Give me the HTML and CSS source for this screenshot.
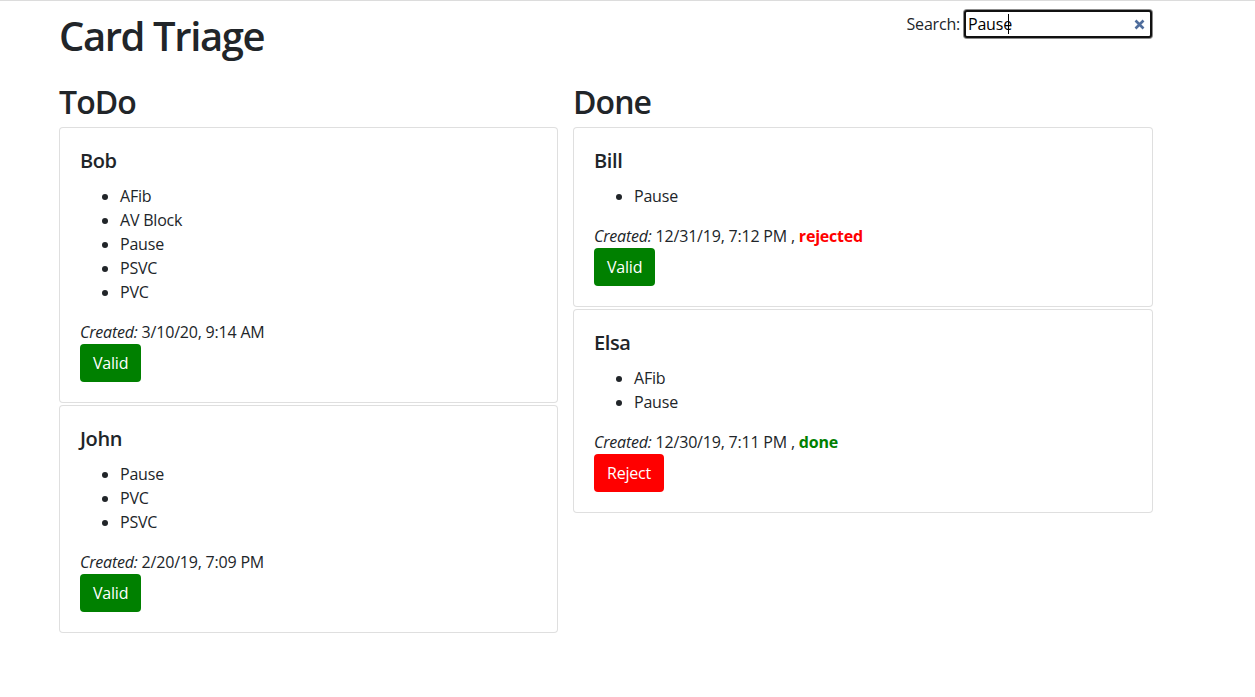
FILE: index.html
```html
<!DOCTYPE html>
<html lang="en">
<head>
<meta charset="utf-8">
<title>Card Triage</title>
<link rel="stylesheet" href="styles.css">
</head>
<body>
<div class="page">
  <header class="header">
    <h1 class="title">Card Triage</h1>
    <div class="search">
      <label class="search-label" for="q">Search:</label>
      <div class="search-box">
        <input id="q" class="search-input" type="text" value="Pause">
        <span class="caret"></span>
        <svg class="clear" width="11" height="11" viewBox="0 0 11 11"><path d="M1.5 1.5 L9.5 9.5 M9.5 1.5 L1.5 9.5" stroke="#4f6d9c" stroke-width="2.6" stroke-linecap="butt"/></svg>
      </div>
    </div>
  </header>
  <main class="board">
    <section class="column">
      <h2 class="col-title">ToDo</h2>
      <div class="cards">
        <div class="card">
          <h5 class="card-title">Bob</h5>
          <ul class="tags"><li>AFib</li><li>AV Block</li><li>Pause</li><li>PSVC</li><li>PVC</li></ul>
          <div class="meta"><em>Created:</em> 3/10/20, 9:14 AM</div>
          <button class="btn btn-valid">Valid</button>
        </div>
        <div class="card">
          <h5 class="card-title">John</h5>
          <ul class="tags"><li>Pause</li><li>PVC</li><li>PSVC</li></ul>
          <div class="meta"><em>Created:</em> 2/20/19, 7:09 PM</div>
          <button class="btn btn-valid">Valid</button>
        </div>
      </div>
    </section>
    <section class="column">
      <h2 class="col-title">Done</h2>
      <div class="cards">
        <div class="card">
          <h5 class="card-title">Bill</h5>
          <ul class="tags"><li>Pause</li></ul>
          <div class="meta"><em>Created:</em> 12/31/19, 7:12 PM , <strong class="st-rejected">rejected</strong></div>
          <button class="btn btn-valid">Valid</button>
        </div>
        <div class="card">
          <h5 class="card-title">Elsa</h5>
          <ul class="tags"><li>AFib</li><li>Pause</li></ul>
          <div class="meta"><em>Created:</em> 12/30/19, 7:11 PM , <strong class="st-done">done</strong></div>
          <button class="btn btn-reject">Reject</button>
        </div>
      </div>
    </section>
  </main>
</div>
</body>
</html>
```
FILE: styles.css
```css
* { box-sizing: border-box; }
html, body { margin: 0; padding: 0; }
body {
  border-top: 1px solid #dcdcdc;
  background: #fff;
  color: #212529;
  font-family: "Open Sans", "Liberation Sans", sans-serif;
  font-size: 16px;
  line-height: 1.5;
  letter-spacing: -0.2px;
}
.page {
  width: 1094px;
  margin-left: 59px;
}
.header {
  display: flex;
  justify-content: space-between;
  align-items: flex-start;
}
.title {
  margin: 11px 0 0 0;
  font-size: 40px;
  font-weight: 600;
  line-height: 48px;
  letter-spacing: -1.4px;
}
.search {
  display: flex;
  align-items: center;
  margin-top: 9px;
  gap: 4px;
  margin-right: 1px;
}
.search-label { font-size: 16px; }
.search-box {
  position: relative;
  width: 188px;
  height: 28px;
}
.search-input {
  width: 100%;
  height: 100%;
  margin: 0;
  padding: 0 2px;
  border: 2px solid #111;
  border-radius: 3px;
  box-shadow: 0 0 0 1px #8a8a8a;
  font-family: inherit;
  font-size: 16px;
  letter-spacing: -0.2px;
  color: #000;
  outline: none;
  background: #fff;
}
.caret {
  position: absolute;
  left: 44px;
  top: 4px;
  width: 1px;
  height: 20px;
  background: #000;
}
.clear {
  position: absolute;
  right: 7px;
  top: 9px;
}
.board {
  display: grid;
  grid-template-columns: 499px 580px;
  column-gap: 15px;
  align-items: start;
  margin-top: 23px;
}
.col-title {
  margin: 0 0 6px 0;
  font-size: 32px;
  font-weight: 600;
  line-height: 38px;
  letter-spacing: -0.9px;
}
.cards {
  display: flex;
  flex-direction: column;
  gap: 2px;
}
.card {
  border: 1px solid rgba(0,0,0,.125);
  border-radius: 4px;
  padding: 20px;
  background: #fff;
}
.card-title {
  margin: 0 0 11px 0;
  padding-top: 1px;
  font-size: 20px;
  font-weight: 600;
  line-height: 24px;
  letter-spacing: -0.4px;
}
.tags {
  margin: 0 0 16px 0;
  padding-left: 40px;
}
.meta em { font-style: italic; }
.st-rejected { color: #ff0000; font-weight: 700; }
.st-done { color: #008000; font-weight: 700; }
.btn {
  display: inline-block;
  padding: 6px 12px;
  border: 1px solid transparent;
  border-radius: 4px;
  font-family: inherit;
  font-size: 16px;
  line-height: 24px;
  letter-spacing: -0.2px;
  color: #fff;
  cursor: pointer;
}
.btn-valid { background: #008000; }
.btn-reject { background: #ff0000; }
```
